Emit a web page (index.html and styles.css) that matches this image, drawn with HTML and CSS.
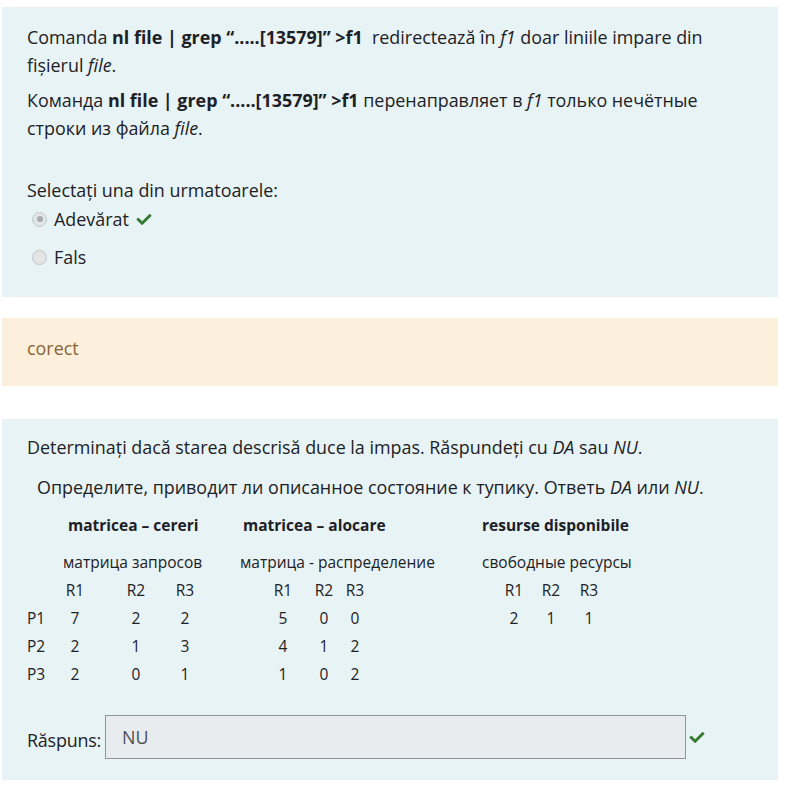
FILE: index.html
```html
<!DOCTYPE html>
<html lang="ro">
<head>
<meta charset="utf-8">
<title>Întrebări</title>
<link rel="stylesheet" href="styles.css">
</head>
<body>
<div class="page">
  <section class="que-box q1">
    <div class="qtext">
      <p>Comanda <b>nl file | grep “.....[13579]” &gt;f1</b>&nbsp; redirectează în <i>f1</i> doar liniile impare din fișierul <i>file</i>.</p>
      <p>Команда <b>nl file | grep “.....[13579]” &gt;f1</b> перенаправляет в <i>f1</i> только нечётные строки из файла <i>file</i>.</p>
    </div>
    <div class="prompt">Selectați una din urmatoarele:</div>
    <div class="answers">
      <div class="opt"><span class="radio checked"></span><span class="opt-label">Adevărat</span><svg class="check" viewBox="0 0 512 512"><path d="M173.9 439.4l-166.4-166.4c-10-10-10-26.2 0-36.2l36.2-36.2c10-10 26.2-10 36.2 0L192 312.7 432.1 72.6c10-10 26.2-10 36.2 0l36.2 36.2c10 10 10 26.2 0 36.2l-294.4 294.4c-10 10-26.2 10-36.2 0z"/></svg></div>
      <div class="opt"><span class="radio"></span><span class="opt-label">Fals</span></div>
    </div>
  </section>

  <div class="feedback">corect</div>

  <section class="que-box q2">
    <p class="q2-line">Determinaţi dacă starea descrisă duce la impas. Răspundeți cu <i>DA</i> sau <i>NU</i>.</p>
    <p class="q2-line ru">Определите, приводит ли описанное состояние к тупику. Ответь <i>DA</i> или <i>NU</i>.</p>

    <div class="matrix">
      <div class="mrow mhead">
        <span></span>
        <b class="h1">matricea – cereri</b>
        <b class="h2">matricea – alocare</b>
        <b class="h3">resurse disponibile</b>
      </div>
      <div class="mrow msub">
        <span></span>
        <span class="s1">матрица запросов</span>
        <span class="s2">матрица - распределение</span>
        <span class="s3">свободные ресурсы</span>
      </div>
      <div class="mrow">
        <span></span>
        <span class="cells ga"><span>R1</span><span>R2</span><span>R3</span></span>
        <span class="cells gb"><span>R1</span><span>R2</span><span>R3</span></span>
        <span class="cells gc"><span>R1</span><span>R2</span><span>R3</span></span>
      </div>
      <div class="mrow">
        <span class="plabel">P1</span>
        <span class="cells ga"><span>7</span><span>2</span><span>2</span></span>
        <span class="cells gb"><span>5</span><span>0</span><span>0</span></span>
        <span class="cells gc"><span>2</span><span>1</span><span>1</span></span>
      </div>
      <div class="mrow">
        <span class="plabel">P2</span>
        <span class="cells ga"><span>2</span><span>1</span><span>3</span></span>
        <span class="cells gb"><span>4</span><span>1</span><span>2</span></span>
        <span></span>
      </div>
      <div class="mrow">
        <span class="plabel">P3</span>
        <span class="cells ga"><span>2</span><span>0</span><span>1</span></span>
        <span class="cells gb"><span>1</span><span>0</span><span>2</span></span>
        <span></span>
      </div>
    </div>

    <div class="answer-row">
      <label class="answer-label">Răspuns:</label>
      <div class="answer-input">NU</div>
      <svg class="check" viewBox="0 0 512 512"><path d="M173.9 439.4l-166.4-166.4c-10-10-10-26.2 0-36.2l36.2-36.2c10-10 26.2-10 36.2 0L192 312.7 432.1 72.6c10-10 26.2-10 36.2 0l36.2 36.2c10 10 10 26.2 0 36.2l-294.4 294.4c-10 10-26.2 10-36.2 0z"/></svg>
    </div>
  </section>
</div>
</body>
</html>
```

FILE: styles.css
```css
html, body {
  margin: 0;
  padding: 0;
  background: #ffffff;
}

body {
  font-family: "Open Sans", "Noto Sans", "Liberation Sans", sans-serif;
  font-size: 17.9px;
  line-height: 28px;
  color: #1d2125;
}

.page {
  width: 776px;
  padding: 7px 0 0 2px;
}

.que-box {
  background: #e7f3f5;
  padding: 0 25px;
}

.q1 {
  padding-top: 16px;
  padding-bottom: 26px;
}

.qtext p {
  margin: 0 0 7px 0;
}

.prompt {
  margin-top: 34px;
}

.answers {
  margin-top: 1px;
}

.opt {
  display: flex;
  align-items: center;
  height: 28px;
  padding-left: 5px;
}

.opt + .opt {
  margin-top: 10px;
}

.radio {
  width: 13px;
  height: 13px;
  border-radius: 50%;
  border: 1px solid #c2c6ca;
  background: #e2e4e6;
  margin-right: 7px;
  display: flex;
  align-items: center;
  justify-content: center;
  flex-shrink: 0;
}

.radio.checked::after {
  content: "";
  width: 6px;
  height: 6px;
  border-radius: 50%;
  background: #a6aaae;
}

.check {
  width: 18px;
  height: 15px;
  fill: #357a32;
  flex-shrink: 0;
}

.opt .check {
  margin-left: 6px;
}

.feedback {
  margin-top: 21px;
  background: #fcefdc;
  color: #8a6434;
  padding: 16px 25px 24px;
}

.q2 {
  margin-top: 33px;
  padding-top: 14px;
  padding-bottom: 21px;
}

.q2-line {
  margin: 0;
}

.q2-line.ru {
  margin-top: 12px;
  padding-left: 10px;
}

.matrix {
  margin-top: 10px;
  font-size: 15.5px;
}

.mrow {
  display: grid;
  grid-template-columns: 31px 182px 242px 1fr;
  height: 28px;
  align-items: center;
}

.msub {
  margin-top: 9px;
}

.mhead b {
  font-weight: 700;
}

.h1 { padding-left: 10px; }
.h2 { padding-left: 3px; }
.s1 { padding-left: 5px; }

.cells {
  display: flex;
}

.cells > span {
  width: 30px;
  text-align: center;
  flex-shrink: 0;
}

.ga > span:nth-child(1) { margin-left: 2px; }
.ga > span:nth-child(2) { margin-left: 31px; }
.ga > span:nth-child(3) { margin-left: 19px; }
.gb > span:nth-child(1) { margin-left: 28px; }
.gb > span:nth-child(2) { margin-left: 11px; }
.gb > span:nth-child(3) { margin-left: 1px; }
.gc > span:nth-child(1) { margin-left: 17px; }
.gc > span:nth-child(2) { margin-left: 7px; }
.gc > span:nth-child(3) { margin-left: 8px; }

.answer-row {
  display: flex;
  align-items: center;
  margin-top: 27px;
}

.answer-label {
  width: 78px;
  position: relative;
  top: 3px;
  letter-spacing: -0.2px;
}

.answer-input {
  width: 563px;
  height: 42px;
  border: 1px solid #8f959e;
  background: #e9ecef;
  color: #495057;
  padding-left: 16px;
  line-height: 42px;
}

.answer-row .check {
  margin-left: 2px;
}
```
